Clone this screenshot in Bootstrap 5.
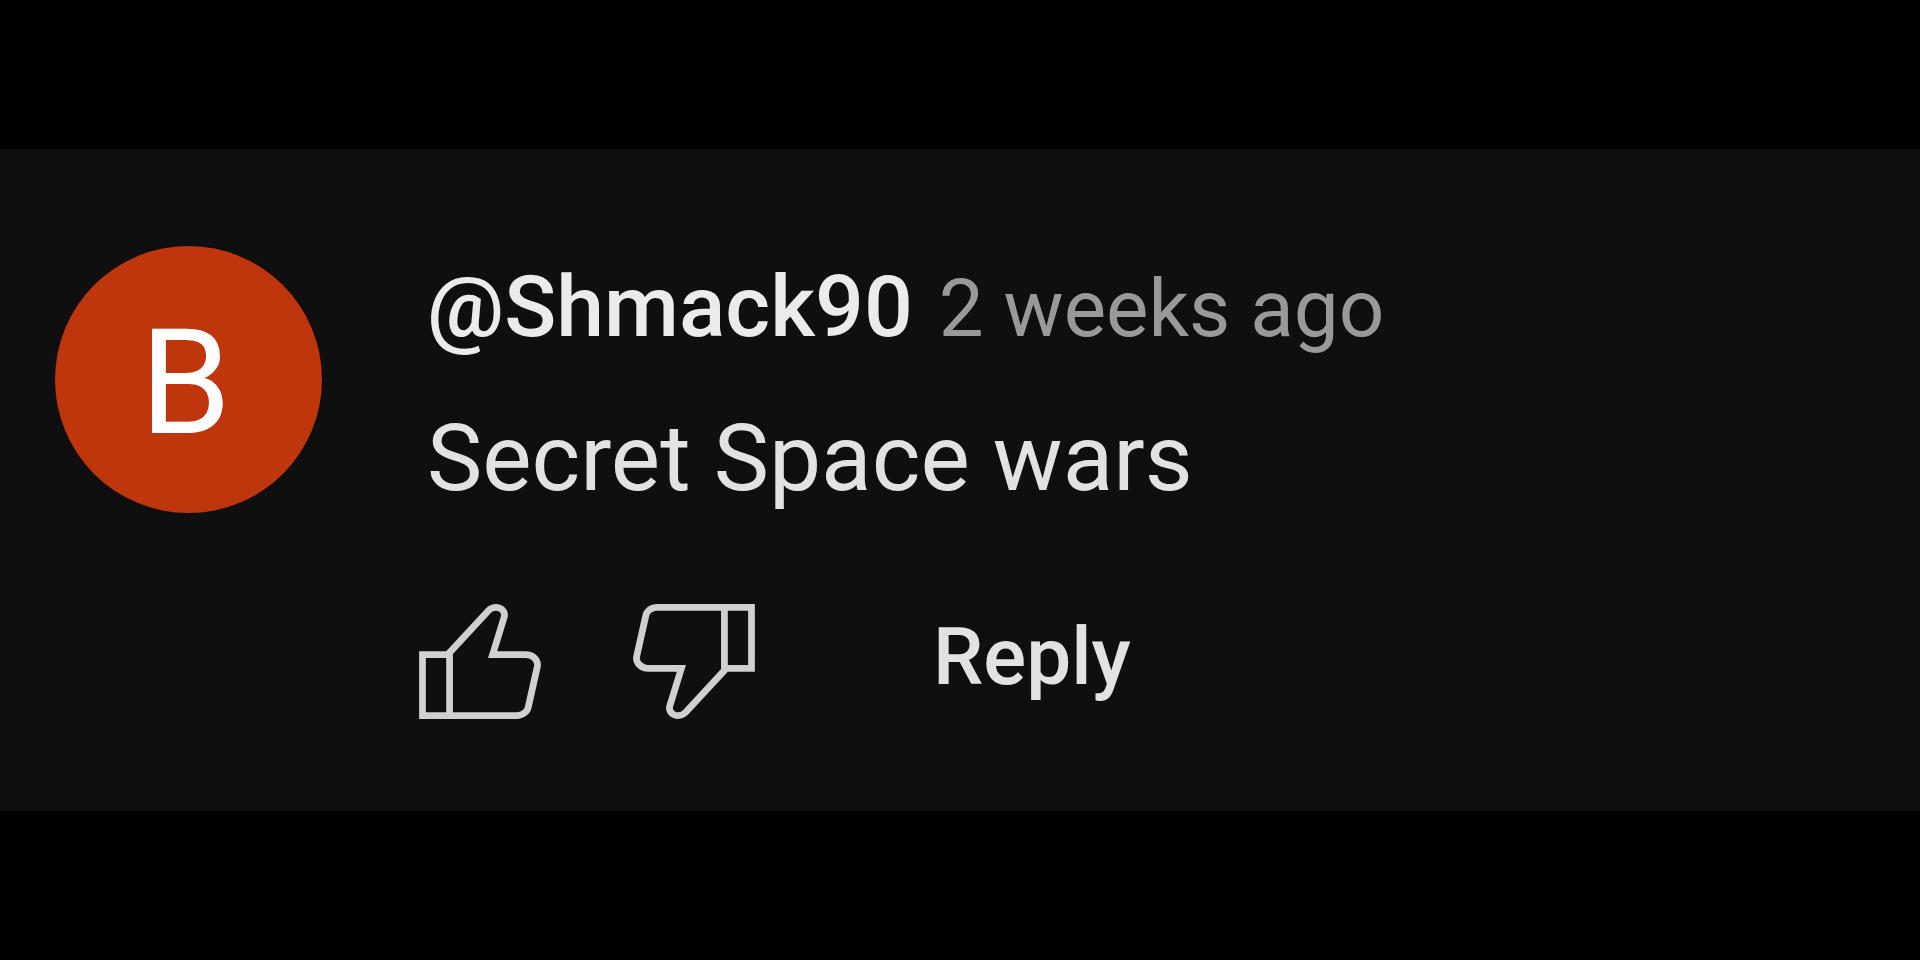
<!DOCTYPE html>
<html lang="en" data-bs-theme="dark">
<head>
<meta charset="utf-8">
<meta name="viewport" content="width=device-width, initial-scale=1">
<title>Comment</title>
<link href="https://cdn.jsdelivr.net/npm/bootstrap@5.3.0/dist/css/bootstrap.min.css" rel="stylesheet">
<style>
body { background: #000; color: #e2e2e2; font-family: Roboto, "Liberation Sans", sans-serif; }
.comment { background: #0f0f0f; padding: 97px 55px 92px; gap: 105px; }
.avatar { width: 267px; height: 267px; padding: 8px 6px 0 0; background: #bf360c; color: #fff; font-size: 146px; line-height: 1; }
.content { padding-top: 5px; }
.byline { column-gap: 26px; line-height: 112px; }
.author { color: #ebebeb; font-size: 86px; font-weight: 500; }
.posted { color: #999; font-size: 80px; }
.message { font-size: 93px; line-height: 120px; margin-top: 34px; }
.votes { gap: 92px; margin: 85px 0 0 -8px; }
.vote svg { display: block; width: 122px; height: 115px; fill: #d0d0d0; }
.reply { color: #e2e2e2; font-size: 80px; font-weight: 500; line-height: 100px; margin-left: 86px; padding: 0 0 10px; }
</style>
</head>
<body class="min-vh-100 d-flex flex-column justify-content-center">
<main>
<article class="comment d-flex align-items-start">
<div class="avatar rounded-circle d-flex align-items-center justify-content-center flex-shrink-0">B</div>
<div class="content">
<header class="byline d-flex flex-wrap align-items-baseline"><a href="#" class="author text-decoration-none">@Shmack90</a><a href="#" class="posted text-decoration-none">2 weeks ago</a></header>
<p class="message mb-0">Secret Space wars</p>
<div class="votes d-flex align-items-center">
<button type="button" class="vote btn p-0 border-0" aria-label="Like"><svg viewBox="3 4 18 17" aria-hidden="true"><path d="M18.77,11h-4.23l1.52-4.94C16.38,5.03,15.54,4,14.38,4c-0.58,0-1.14,0.24-1.52,0.65L7,11H3v10h4h1h9.43c1.06,0,1.98-0.67,2.19-1.61l1.34-6C21.23,12.15,20.18,11,18.77,11z M7,20H4v-8h3V20z M19.98,13.17l-1.34,6C18.54,19.65,18.03,20,17.43,20H8v-8.61l5.6-6.06C13.79,5.12,14.08,5,14.38,5c0.26,0,0.5,0.11,0.63,0.3c0.07,0.1,0.15,0.26,0.09,0.47l-1.52,4.94L13.18,12h1.35h4.23c0.41,0,0.8,0.17,1.03,0.46C19.92,12.61,20.05,12.86,19.98,13.17z"/></svg></button>
<button type="button" class="vote btn p-0 border-0" aria-label="Dislike"><svg viewBox="3 4 18 17" aria-hidden="true"><path transform="rotate(180 12 12.5)" d="M18.77,11h-4.23l1.52-4.94C16.38,5.03,15.54,4,14.38,4c-0.58,0-1.14,0.24-1.52,0.65L7,11H3v10h4h1h9.43c1.06,0,1.98-0.67,2.19-1.61l1.34-6C21.23,12.15,20.18,11,18.77,11z M7,20H4v-8h3V20z M19.98,13.17l-1.34,6C18.54,19.65,18.03,20,17.43,20H8v-8.61l5.6-6.06C13.79,5.12,14.08,5,14.38,5c0.26,0,0.5,0.11,0.63,0.3c0.07,0.1,0.15,0.26,0.09,0.47l-1.52,4.94L13.18,12h1.35h4.23c0.41,0,0.8,0.17,1.03,0.46C19.92,12.61,20.05,12.86,19.98,13.17z"/></svg></button>
<button type="button" class="reply btn border-0">Reply</button>
</div>
</div>
</article>
</main>
<script src="https://cdn.jsdelivr.net/npm/bootstrap@5.3.0/dist/js/bootstrap.bundle.min.js"></script>
</body>
</html>
